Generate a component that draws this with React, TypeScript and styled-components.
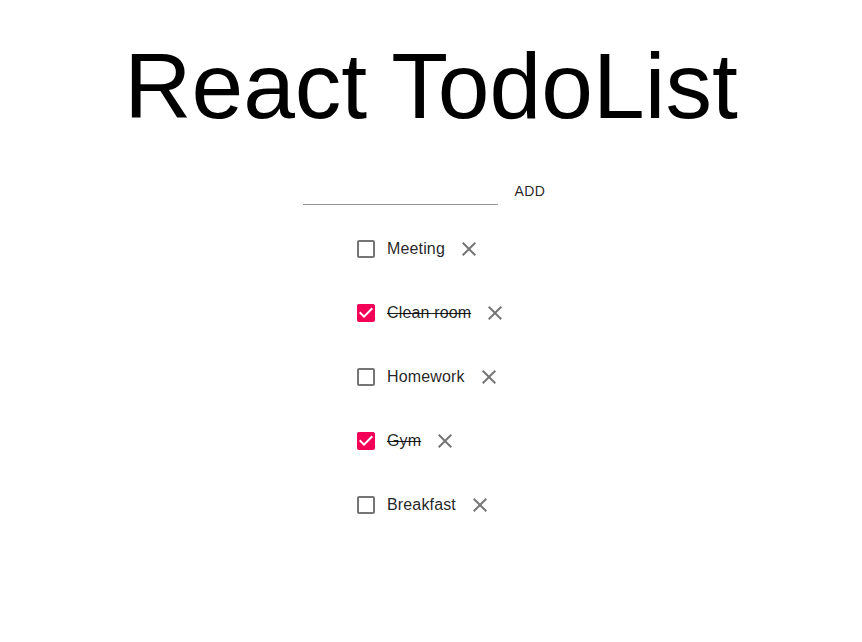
import React, { useState } from "react";
import styled, { createGlobalStyle } from "styled-components";

const GlobalStyle = createGlobalStyle`
  html, body { margin: 0; padding: 0; background: #fff; }
  body { font-family: "Liberation Sans", Arial, sans-serif; }
  * { box-sizing: border-box; }
`;

const Page = styled.div`
  display: flex;
  flex-direction: column;
  align-items: center;
  padding-top: 33px;
`;

const Title = styled.h1`
  margin: 0;
  font-family: "Liberation Sans", Arial, sans-serif;
  font-size: 93px;
  font-weight: 400;
  line-height: 107px;
  color: #000;
  text-align: center;
`;

const Form = styled.form`
  display: flex;
  align-items: flex-start;
  height: 32px;
  margin-top: 33px;
  padding-left: 3px;
`;

const TextInput = styled.input`
  width: 195px;
  height: 32px;
  padding: 6px 0 7px;
  border: none;
  border-bottom: 1px solid rgba(0, 0, 0, 0.42);
  outline: none;
  background: transparent;
  font-family: "Liberation Sans", Arial, sans-serif;
  font-size: 16px;
  color: rgba(0, 0, 0, 0.87);
`;

const AddButton = styled.button`
  min-width: 64px;
  height: 36px;
  padding: 6px 8px;
  border: none;
  border-radius: 4px;
  background: transparent;
  font-family: "Liberation Sans", Arial, sans-serif;
  font-size: 14px;
  font-weight: 400;
  line-height: 1.75;
  letter-spacing: 0.02857em;
  text-transform: uppercase;
  color: rgba(0, 0, 0, 0.87);
  cursor: pointer;
`;

const List = styled.ul`
  list-style: none;
  margin: 20px 0 0;
  padding: 0;
  width: 172px;
  display: flex;
  flex-direction: column;
  gap: 16px;
`;

const Row = styled.li`
  display: flex;
  align-items: center;
  height: 48px;
`;

const CheckBox = styled.button<{ $checked: boolean }>`
  display: flex;
  align-items: center;
  justify-content: center;
  width: 42px;
  height: 42px;
  padding: 9px;
  border: none;
  background: transparent;
  cursor: pointer;
  color: ${(p) => (p.$checked ? "#f50057" : "rgba(0, 0, 0, 0.54)")};
  svg { width: 24px; height: 24px; display: block; fill: currentColor; }
`;

const Label = styled.span<{ $done: boolean }>`
  font-family: "Liberation Sans", Arial, sans-serif;
  font-size: 16px;
  line-height: 1.5;
  letter-spacing: 0.15px;
  white-space: nowrap;
  color: rgba(0, 0, 0, 0.87);
  text-decoration: ${(p) => (p.$done ? "line-through" : "none")};
`;

const DeleteButton = styled.button`
  display: flex;
  align-items: center;
  justify-content: center;
  width: 48px;
  height: 48px;
  padding: 12px;
  border: none;
  border-radius: 50%;
  background: transparent;
  cursor: pointer;
  color: rgba(0, 0, 0, 0.54);
  svg { width: 24px; height: 24px; display: block; fill: currentColor; }
`;

const CheckedIcon = () => (
  <svg viewBox="0 0 24 24">
    <path d="M19 3H5c-1.11 0-2 .9-2 2v14c0 1.1.89 2 2 2h14c1.11 0 2-.9 2-2V5c0-1.1-.89-2-2-2zm-9 14l-5-5 1.41-1.41L10 14.17l7.59-7.59L19 8l-9 9z" />
  </svg>
);

const BlankIcon = () => (
  <svg viewBox="0 0 24 24">
    <path d="M19 5v14H5V5h14m0-2H5c-1.1 0-2 .9-2 2v14c0 1.1.9 2 2 2h14c1.1 0 2-.9 2-2V5c0-1.1-.9-2-2-2z" />
  </svg>
);

const CloseIcon = () => (
  <svg viewBox="0 0 24 24">
    <path d="M19 6.41L17.59 5 12 10.59 6.41 5 5 6.41 10.59 12 5 17.59 6.41 19 12 13.41 17.59 19 19 17.59 13.41 12z" />
  </svg>
);

type Todo = { id: number; text: string; done: boolean };

const initial: Todo[] = [
  { id: 1, text: "Meeting", done: false },
  { id: 2, text: "Clean room", done: true },
  { id: 3, text: "Homework", done: false },
  { id: 4, text: "Gym", done: true },
  { id: 5, text: "Breakfast", done: false },
];

export default function App() {
  const [todos, setTodos] = useState<Todo[]>(initial);
  const [value, setValue] = useState("");

  const add = (e: React.FormEvent) => {
    e.preventDefault();
    if (!value.trim()) return;
    setTodos((t) => [...t, { id: Date.now(), text: value.trim(), done: false }]);
    setValue("");
  };

  return (
    <Page>
      <GlobalStyle />
      <Title>React TodoList</Title>
      <Form onSubmit={add}>
        <TextInput value={value} onChange={(e) => setValue(e.target.value)} />
        <AddButton type="submit">Add</AddButton>
      </Form>
      <List>
        {todos.map((t) => (
          <Row key={t.id}>
            <CheckBox
              type="button"
              $checked={t.done}
              onClick={() =>
                setTodos((all) => all.map((x) => (x.id === t.id ? { ...x, done: !x.done } : x)))
              }
            >
              {t.done ? <CheckedIcon /> : <BlankIcon />}
            </CheckBox>
            <Label $done={t.done}>{t.text}</Label>
            <DeleteButton
              type="button"
              onClick={() => setTodos((all) => all.filter((x) => x.id !== t.id))}
            >
              <CloseIcon />
            </DeleteButton>
          </Row>
        ))}
      </List>
    </Page>
  );
}
